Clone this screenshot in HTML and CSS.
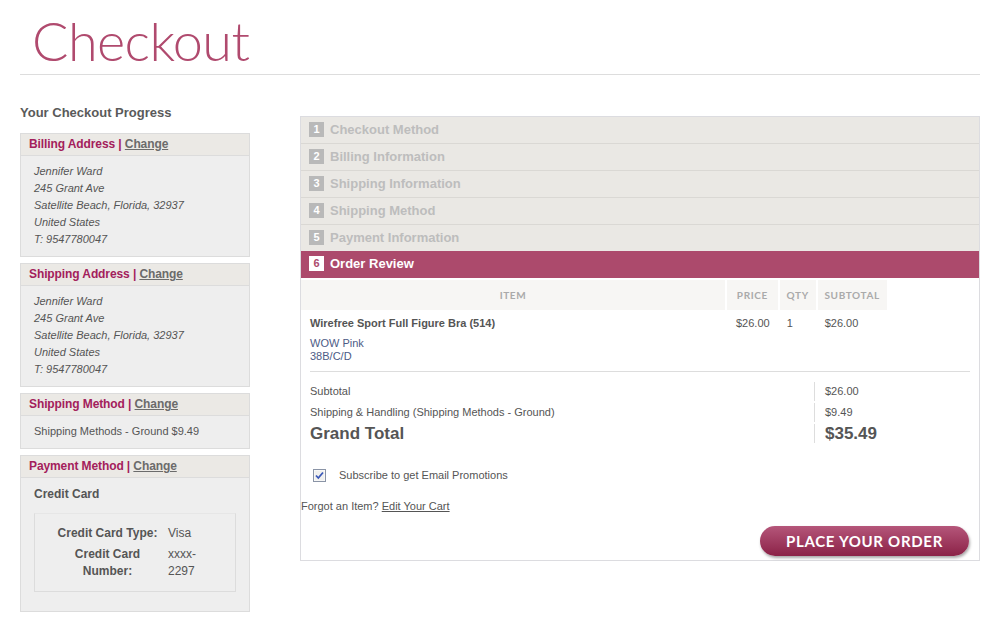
FILE: index.html
```html
<!DOCTYPE html>
<html lang="en">

<head>
    <meta charset="UTF-8">
    <meta name="viewport" content="width=device-width, initial-scale=1.0">
    <title>Checkout</title>
    <link rel="stylesheet" href="styles.css">
</head>

<body>

    <div class="page">
        <div class="page-head">
            <h1>Checkout</h1>
        </div>

        <div class="main">
            <aside class="progress">
                <h2>Your Checkout Progress</h2>

                <div class="progress-box">
                    <div class="box-head">Billing Address <span class="sep">|</span> <a href="#">Change</a></div>
                    <address class="box-body">
                        Jennifer Ward<br>
                        245 Grant Ave<br>
                        Satellite Beach, Florida, 32937<br>
                        United States<br>
                        T: 9547780047
                    </address>
                </div>

                <div class="progress-box">
                    <div class="box-head">Shipping Address <span class="sep">|</span> <a href="#">Change</a></div>
                    <address class="box-body">
                        Jennifer Ward<br>
                        245 Grant Ave<br>
                        Satellite Beach, Florida, 32937<br>
                        United States<br>
                        T: 9547780047
                    </address>
                </div>

                <div class="progress-box">
                    <div class="box-head">Shipping Method <span class="sep">|</span> <a href="#">Change</a></div>
                    <div class="box-body">Shipping Methods - Ground $9.49</div>
                </div>

                <div class="progress-box">
                    <div class="box-head">Payment Method <span class="sep">|</span> <a href="#">Change</a></div>
                    <div class="box-body payment-body">
                        <p class="pay-name">Credit Card</p>
                        <div class="card-info">
                            <table>
                                <tr>
                                    <th>Credit Card Type:</th>
                                    <td>Visa</td>
                                </tr>
                                <tr>
                                    <th>Credit Card Number:</th>
                                    <td>xxxx-2297</td>
                                </tr>
                            </table>
                        </div>
                    </div>
                </div>
            </aside>

            <section class="steps">
                <ol class="step-list">
                    <li class="step"><span class="step-num">1</span>Checkout Method</li>
                    <li class="step"><span class="step-num">2</span>Billing Information</li>
                    <li class="step"><span class="step-num">3</span>Shipping Information</li>
                    <li class="step"><span class="step-num">4</span>Shipping Method</li>
                    <li class="step"><span class="step-num">5</span>Payment Information</li>
                    <li class="step active"><span class="step-num">6</span>Order Review</li>
                </ol>

                <div class="review">
                    <table class="items">
                        <thead>
                            <tr>
                                <th class="col-item">Item</th>
                                <th class="col-price">Price</th>
                                <th class="col-qty">Qty</th>
                                <th class="col-sub">Subtotal</th>
                            </tr>
                        </thead>
                        <tbody>
                            <tr>
                                <td>
                                    <h3 class="item-name">Wirefree Sport Full Figure Bra (514)</h3>
                                    <p class="item-opts">WOW Pink<br>38B/C/D</p>
                                </td>
                                <td>$26.00</td>
                                <td class="qty">1</td>
                                <td class="sub">$26.00</td>
                            </tr>
                        </tbody>
                    </table>

                    <table class="totals">
                        <tr>
                            <td>Subtotal</td>
                            <td class="amount">$26.00</td>
                        </tr>
                        <tr>
                            <td>Shipping &amp; Handling (Shipping Methods - Ground)</td>
                            <td class="amount">$9.49</td>
                        </tr>
                        <tr class="grand">
                            <td>Grand Total</td>
                            <td class="amount">$35.49</td>
                        </tr>
                    </table>

                    <label class="subscribe">
                        <svg class="check" width="13" height="13" viewBox="0 0 13 13">
                            <rect x="0.5" y="0.5" width="12" height="12" fill="#fff" stroke="#8a94a6" />
                            <rect x="1.5" y="1.5" width="10" height="10" fill="#f0f0ee" />
                            <path d="M3 6.5 L5.3 9 L10 3.5" fill="none" stroke="#3a58b8" stroke-width="1.8" />
                        </svg>
                        Subscribe to get Email Promotions
                    </label>

                    <p class="forgot">Forgot an Item? <a href="#">Edit Your Cart</a></p>

                    <div class="place-order">
                        <button class="order-btn">PLACE YOUR ORDER</button>
                    </div>
                </div>
            </section>
        </div>
    </div>

</body>

</html>
```

FILE: styles.css
```css
* {
    margin: 0;
    padding: 0;
    box-sizing: border-box;
}

body {
    font-family: 'Liberation Sans', Arial, sans-serif;
    font-size: 11px;
    color: #555;
    background-color: #fff;
}

a {
    color: #666;
}

.page {
    width: 960px;
    margin-left: 20px;
}

.page-head {
    height: 75px;
    padding-top: 14px;
    border-bottom: 1px solid #dddddd;
}

.page-head h1 {
    font-family: Lato, 'Open Sans', sans-serif;
    font-weight: 300;
    font-size: 54px;
    line-height: 54px;
    color: #b04a6e;
    padding-left: 12px;
    letter-spacing: -0.6px;
}

.main {
    display: flex;
    gap: 50px;
    align-items: flex-start;
}

/* left column */

.progress {
    width: 230px;
    padding-top: 29px;
}

.progress h2 {
    font-size: 13px;
    line-height: 18px;
    color: #5a5a5a;
    margin-bottom: 11px;
}

.progress-box {
    background-color: #eeeeee;
    border: 1px solid #dcdcdc;
    margin-bottom: 6px;
}

.box-head {
    height: 22px;
    line-height: 21px;
    padding: 0 8px;
    background-color: #ebe9e5;
    border-bottom: 1px solid #dcdcdc;
    font-size: 12px;
    font-weight: bold;
    color: #a3205b;
    letter-spacing: -0.1px;
}

.box-head a {
    color: #6b6b6b;
}

.box-body {
    padding: 7px 13px 8px;
    line-height: 17px;
    font-size: 11px;
    color: #555;
}

address.box-body {
    padding-bottom: 8px;
}

.payment-body {
    padding-top: 8px;
    padding-bottom: 19px;
}

.pay-name {
    font-size: 12px;
    font-weight: bold;
    line-height: 17px;
    margin-bottom: 10px;
}

.card-info {
    border: 1px solid #dcdcdc;
    border-top-color: #e6e6e6;
    padding: 9px 0 9px 20px;
}

.card-info table {
    border-collapse: collapse;
    font-size: 12px;
    line-height: 17px;
}

.card-info th {
    width: 113px;
    padding: 2px 8px 2px 0;
    text-align: center;
    font-weight: bold;
    vertical-align: top;
}

.card-info td {
    width: 40px;
    padding: 2px 0;
    vertical-align: top;
    word-break: break-word;
}

/* right column */

.steps {
    flex: 1;
    margin-top: 41px;
    border: 1px solid #dcdce0;
}

.step-list {
    list-style: none;
}

.step {
    height: 27px;
    display: flex;
    align-items: center;
    gap: 6px;
    padding-left: 8px;
    padding-bottom: 1px;
    background-color: #eae8e4;
    border-bottom: 1px solid #dad8d4;
    font-size: 13px;
    font-weight: bold;
    color: #bdbdbd;
}

.step:nth-child(5) {
    height: 26px;
    border-bottom: none;
}

.step-num {
    width: 15px;
    height: 15px;
    line-height: 15px;
    text-align: center;
    font-size: 11px;
    background-color: #b9b9b9;
    color: #fff;
}

.step.active {
    background-color: #ac4a6c;
    border-bottom-color: #ac4a6c;
    color: #fff;
}

.step.active .step-num {
    background-color: #fff;
    color: #ac4a6c;
}

.review {
    padding: 2px 0 4px;
}

.items {
    border-collapse: separate;
    border-spacing: 2px 0;
    margin-left: -2px;
}

.items th {
    height: 30px;
    background-color: #f7f6f4;
    font-family: Lato, 'Open Sans', sans-serif;
    font-size: 10px;
    font-weight: bold;
    letter-spacing: 0.6px;
    text-transform: uppercase;
    color: #aaa;
}

.col-item { width: 424px; }
.col-price { width: 49px; }
.col-qty { width: 36px; }
.col-sub { width: 69px; }

.items td {
    padding: 7px 8px 8px 9px;
    vertical-align: top;
    line-height: 13px;
    font-size: 11px;
}

.items td.qty,
.items td.sub {
    padding-left: 7px;
}

.item-name {
    font-size: 11px;
    font-weight: bold;
    line-height: 13px;
    color: #555;
}

.item-opts {
    margin-top: 7px;
    color: #4d5b86;
}

.totals {
    width: 660px;
    margin: 0 9px;
    padding-top: 8px;
    border-top: 1px solid #dddddd;
    border-collapse: separate;
    border-spacing: 0 2px;
}

.totals td {
    height: 19px;
    line-height: 19px;
    padding: 0;
}

.totals .amount {
    width: 156px;
    padding-left: 10px;
    border-left: 1px solid #dddddd;
}

.totals .grand td {
    font-size: 17px;
    font-weight: bold;
}

.subscribe {
    display: flex;
    align-items: center;
    gap: 13px;
    margin: 22px 0 0 12px;
    line-height: 16px;
}

.check {
    display: block;
}

.forgot {
    margin-top: 17px;
    line-height: 13px;
}

.forgot a {
    color: #555;
}

.place-order {
    display: flex;
    justify-content: flex-end;
    padding-right: 10px;
    margin-top: 13px;
}

.order-btn {
    width: 209px;
    height: 30px;
    border: none;
    border-radius: 15px;
    background: linear-gradient(#b5567a, #8b2247);
    box-shadow: 1px 2px 3px rgba(0, 0, 0, 0.35);
    color: #fff;
    font-family: Lato, 'Open Sans', sans-serif;
    font-size: 15px;
    font-weight: bold;
    letter-spacing: 0.7px;
    cursor: pointer;
}
```
